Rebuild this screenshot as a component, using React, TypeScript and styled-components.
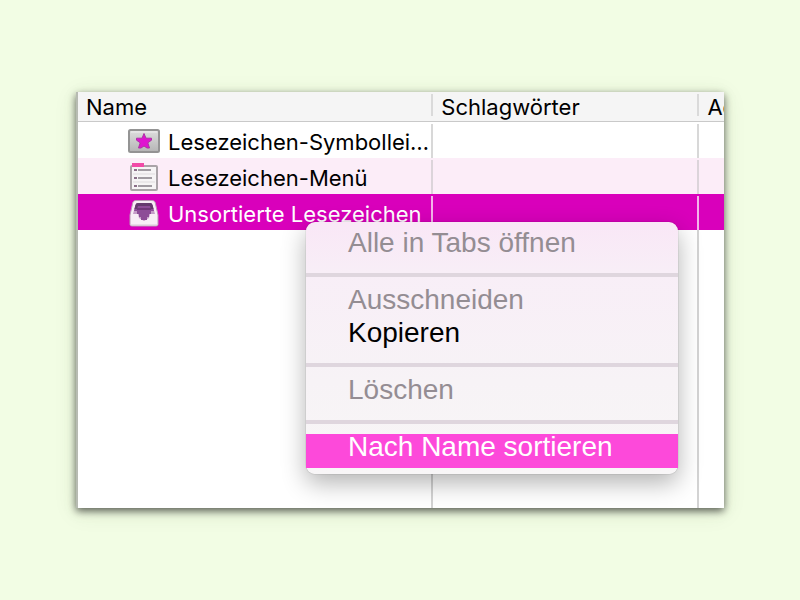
import React from "react";
import styled, { createGlobalStyle, css } from "styled-components";

const GlobalStyle = createGlobalStyle`
  *, *::before, *::after { box-sizing: border-box; }
  body { margin: 0; background: #f2fde4; }
`;

const Page = styled.main`
  min-height: 100vh;
  padding: 92px 76px;
`;

const Panel = styled.section`
  position: relative;
  border-left: 2px solid #b7bbb2;
  background: #fff;
  box-shadow: 0 3px 8px rgba(0, 0, 0, 0.62), 0 4px 22px rgba(60, 80, 40, 0.1);
`;

const Table = styled.table`
  width: 100%;
  height: calc(100vh - 184px);
  min-height: 416px;
  table-layout: fixed;
  border-collapse: separate;
  border-spacing: 0;
  font: 22px/28px Inter, "Noto Sans", sans-serif;
  color: #000;
`;

const Column = styled.col<{ $width?: string }>`
  width: ${(p) => p.$width ?? "auto"};
`;

const HeadCell = styled.th`
  height: 30px;
  padding: 1px 0 0 8px;
  border-bottom: 1px solid #c9c9c9;
  background: #f5f5f5;
  font-weight: 400;
  text-align: left;
  white-space: nowrap;
  overflow: hidden;

  &:not(:last-child) {
    background: linear-gradient(#dadada, #dadada) right 2px / 2px 22px no-repeat #f5f5f5;
  }
`;

type Tone = "plain" | "tinted" | "selected";

const tones = {
  plain: { back: "#ffffff", line: "#d8d8d8", text: "#000000" },
  tinted: { back: "#fcedf8", line: "#dcd4da", text: "#000000" },
  selected: { back: "#d900bb", line: "#f3b4ea", text: "#ffffff" },
};

const Row = styled.tr<{ $tone: Tone }>`
  height: 36px;
  background: ${(p) => tones[p.$tone].back};
  color: ${(p) => tones[p.$tone].text};

  td:not(:last-child) {
    background: linear-gradient(${(p) => tones[p.$tone].line}, ${(p) => tones[p.$tone].line})
      right 2px / 2px 100% no-repeat;
  }
`;

const Cell = styled.td`
  padding: 0;
`;

const FillerRow = styled.tr`
  td:not(:last-child) {
    border-right: 2px solid #d3d3d3;
  }
`;

const Bookmark = styled.div`
  display: flex;
  align-items: center;
  gap: 8px;
  height: 36px;
  padding: 0 0 0 50px;
  white-space: nowrap;

  svg {
    flex: none;
  }
`;

const Label = styled.span`
  padding-top: 4px;
`;

const Menu = styled.div`
  position: absolute;
  top: 130px;
  left: 228px;
  width: 372px;
  padding: 8px 0 6px;
  border-radius: 9px;
  background: linear-gradient(#f9e7f6, #f8eef7 50px, #f7f3f6 160px, #f8f6f7);
  box-shadow: 0 0 1px rgba(0, 0, 0, 0.5), 0 9px 24px rgba(0, 0, 0, 0.3);
`;

const MenuItem = styled.button`
  display: block;
  width: 100%;
  height: 33px;
  padding: 0 8px 8px 42px;
  border: 0;
  background: transparent;
  color: #000;
  font: 28px/25px "Liberation Sans", Arial, sans-serif;
  text-align: left;
  white-space: nowrap;

  &:disabled {
    color: #948d93;
  }

  ${(p) =>
    p["aria-current"] &&
    css`
      height: 34px;
      padding-bottom: 10px;
      background: #fd49da;
      color: #fff;
    `}
`;

const Divider = styled.hr`
  height: 4px;
  margin: 10px 0;
  border: 0;
  background: #dfd6de;
`;

const ToolbarIcon = () => (
  <svg width="32" height="32" viewBox="0 0 32 32" aria-hidden="true">
    <defs>
      <linearGradient id="bar" x2="0" y2="1">
        <stop stopColor="#dedede" />
        <stop offset="1" stopColor="#b5b5b5" />
      </linearGradient>
    </defs>
    <rect x="1" y="6" width="30" height="22" rx="1.5" fill="url(#bar)" stroke="#949494" strokeWidth="2" />
    <path d="M3 8h26" stroke="#eee" />
    <path
      d="M16 9.500l2 4.700h5.500v2l-3.700 2.600 1.700 5.200H19l-3-2-3 2h-2.500l1.700-5.200-3.700-2.600v-2H14z"
      fill="#df13d0"
      stroke="#ad32a4"
      strokeWidth="1"
    />
  </svg>
);

const MenuIcon = () => (
  <svg width="32" height="32" viewBox="0 0 32 32" aria-hidden="true">
    <rect x="3" y="6" width="26" height="24" rx="1" fill="#f6f4f5" stroke="#aaa3a8" strokeWidth="2" />
    <path d="M4 3h12v4H4z" fill="#f14aa7" />
    <path d="M5 14h22M5 22h22" stroke="#dedbdd" />
    <path d="M6 10h3M6 18h3M6 26h3" stroke="#8a6f88" strokeWidth="2" />
    <path d="M10 10h13M10 18h14M10 26h14" stroke="#a19ca2" strokeWidth="2" />
  </svg>
);

const TrayIcon = () => (
  <svg width="32" height="32" viewBox="0 0 32 32" aria-hidden="true">
    <path
      d="M8 4.500h16c2 0 3 1 3.300 2.500L30 19v9.500q0 1.500-2 1.500H4q-2 0-2-1.500V19L4.700 7c.3-1.500 1.300-2.500 3.300-2.500z"
      fill="#f8eef6"
      stroke="#b99bb4"
    />
    <path d="M10 7h12q2 0 2.500 2L27 18h-5l-1 4-5 3-5-3-1-4H5l2.500-9Q8 7 10 7z" fill="#c59dc8" />
    <path d="M10 7h12q2 0 2.500 2l1.500 6h-3v3h-2v3h-2v3h-6v-3h-2v-3H9v-3H6l1.500-6Q8 7 10 7z" fill="#8d4d97" />
    <path d="M10 7h12q2 0 2.500 2l1 4H23l-1-3H10l-1 3H6.500l1-4Q8 7 10 7z" fill="#653a6d" />
    <path d="M9 13h14" stroke="#713779" strokeWidth="2" />
    <path d="M3 29h26" stroke="#d9ccd8" />
  </svg>
);

const bookmarks: { name: string; tone: Tone; Icon: React.FC }[] = [
  { name: "Lesezeichen-Symbollei…", tone: "plain", Icon: ToolbarIcon },
  { name: "Lesezeichen-Menü", tone: "tinted", Icon: MenuIcon },
  { name: "Unsortierte Lesezeichen", tone: "selected", Icon: TrayIcon },
];

export default function App() {
  return (
    <>
      <GlobalStyle />
      <Page>
        <Panel>
          <Table>
            <colgroup>
              <Column $width="55%" />
              <Column $width="41.2%" />
              <Column />
            </colgroup>
            <thead>
              <tr>
                <HeadCell scope="col">Name</HeadCell>
                <HeadCell scope="col">Schlagwörter</HeadCell>
                <HeadCell scope="col">Ad</HeadCell>
              </tr>
            </thead>
            <tbody>
              {bookmarks.map(({ name, tone, Icon }) => (
                <Row key={name} $tone={tone} aria-selected={tone === "selected"}>
                  <Cell>
                    <Bookmark>
                      <Icon />
                      <Label>{name}</Label>
                    </Bookmark>
                  </Cell>
                  <Cell />
                  <Cell />
                </Row>
              ))}
              <FillerRow>
                <Cell />
                <Cell />
                <Cell />
              </FillerRow>
            </tbody>
          </Table>
          <Menu role="menu">
            <MenuItem role="menuitem" disabled>Alle in Tabs öffnen</MenuItem>
            <Divider />
            <MenuItem role="menuitem" disabled>Ausschneiden</MenuItem>
            <MenuItem role="menuitem">Kopieren</MenuItem>
            <Divider />
            <MenuItem role="menuitem" disabled>Löschen</MenuItem>
            <Divider />
            <MenuItem role="menuitem" aria-current="true">Nach Name sortieren</MenuItem>
          </Menu>
        </Panel>
      </Page>
    </>
  );
}
